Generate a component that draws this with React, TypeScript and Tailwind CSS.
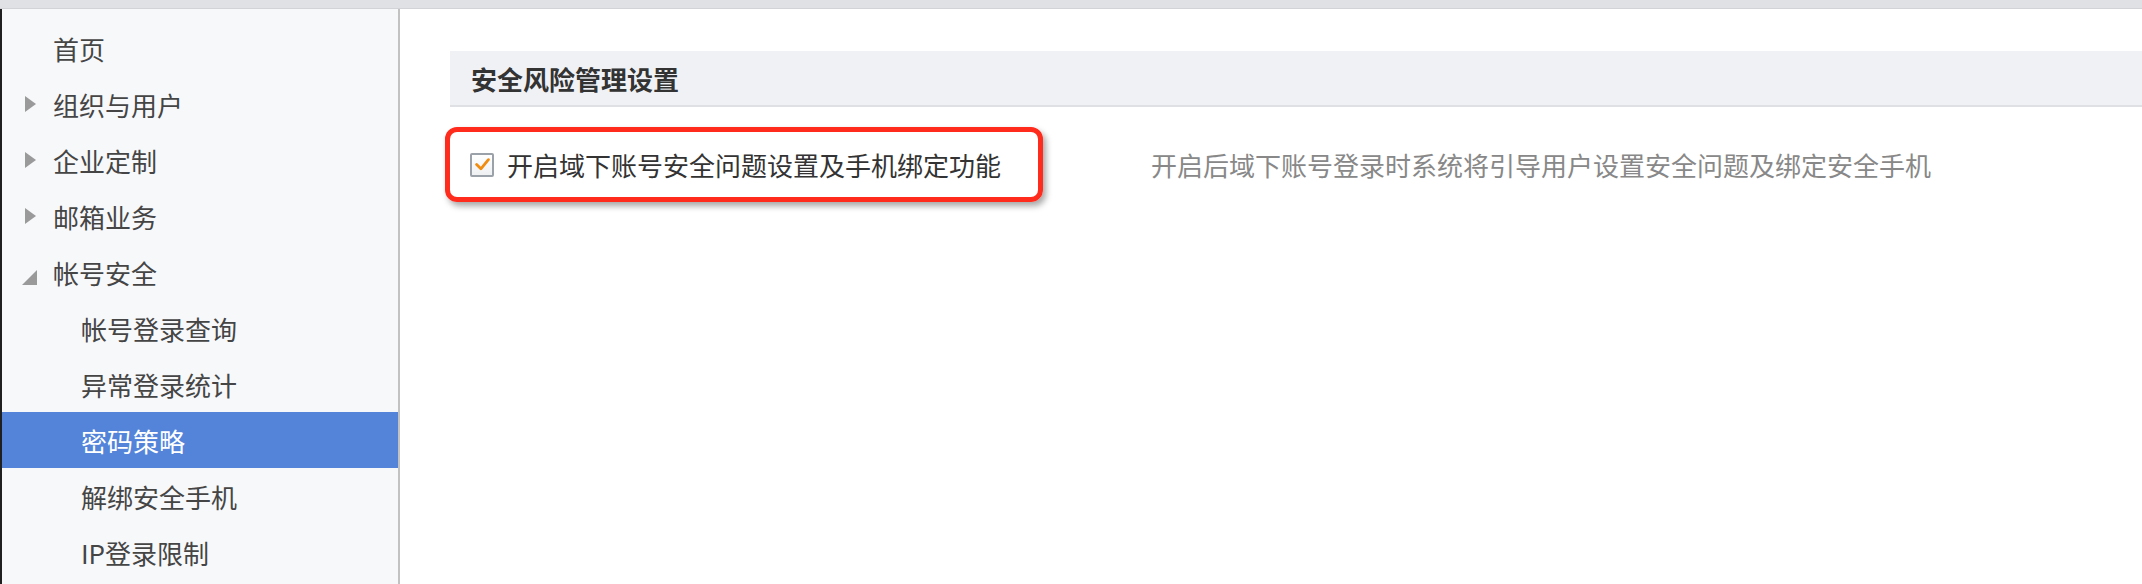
import React from 'react';

type NavItem = {
  label: string;
  level: 0 | 1;
  arrow?: 'right' | 'down';
  active?: boolean;
};

const navItems: NavItem[] = [
  { label: '首页', level: 0 },
  { label: '组织与用户', level: 0, arrow: 'right' },
  { label: '企业定制', level: 0, arrow: 'right' },
  { label: '邮箱业务', level: 0, arrow: 'right' },
  { label: '帐号安全', level: 0, arrow: 'down' },
  { label: '帐号登录查询', level: 1 },
  { label: '异常登录统计', level: 1 },
  { label: '密码策略', level: 1, active: true },
  { label: '解绑安全手机', level: 1 },
  { label: 'IP登录限制', level: 1 },
];

const font = { fontFamily: '"Noto Sans CJK SC", "Noto Sans", sans-serif' };

// 侧栏的小三角
const Arrow = ({ dir }: { dir: 'right' | 'down' }) =>
  dir === 'right' ? (
    <svg width="12" height="16" viewBox="0 0 12 16" className="absolute left-[23px]">
      <path d="M0 0 L11 8 L0 16 Z" fill="#9a9a9a" />
    </svg>
  ) : (
    <svg width="15" height="15" viewBox="0 0 15 15" className="absolute left-[20px] top-[26px]">
      <path d="M15 0 L15 15 L0 15 Z" fill="#9a9a9a" />
    </svg>
  );

const Sidebar = () => (
  <div className="w-[398px] shrink-0 bg-[#f7f8fa] border-r-2 border-[#c2c2c2] pt-[11px]">
    {navItems.map((item) => (
      <div
        key={item.label}
        className={`relative h-[56px] flex items-center text-[26px] ${
          item.level === 0 ? 'pl-[51px]' : 'pl-[79px]'
        } ${item.active ? 'bg-[#5384da] text-white' : 'text-[#454545]'}`}
      >
        {item.arrow && <Arrow dir={item.arrow} />}
        <span>{item.label}</span>
      </div>
    ))}
  </div>
);

const Checkbox = () => (
  <div className="w-[24px] h-[24px] border-2 border-[#9ba1a8] bg-gradient-to-b from-white to-[#eef0f2] rounded-[2px] flex items-center justify-center shrink-0">
    <svg width="15" height="13" viewBox="0 0 14 12">
      <path d="M1.5 6 L5.5 10 L12.5 1.5" fill="none" stroke="#f08c0f" strokeWidth="2.6" strokeLinecap="round" strokeLinejoin="round" />
    </svg>
  </div>
);

export default function App() {
  return (
    <div className="w-[2142px] h-[584px] overflow-hidden flex flex-col bg-white" style={font}>
      {/* 顶部灰条 */}
      <div className="h-[9px] shrink-0 bg-[#e0e1e5] border-b border-[#d2d3d7]" />

      <div className="flex flex-1 min-h-0">
        <div className="w-[2px] shrink-0 bg-[#202020]" />
        <Sidebar />

        {/* 主内容 */}
        <div className="flex-1 pt-[42px] pl-[50px]">
          <div className="h-[56px] bg-[#f0f1f5] border-b-2 border-[#dfe0e4] flex items-center pl-[21px]">
            <span className="text-[26px] font-bold text-[#333]">安全风险管理设置</span>
          </div>

          <div className="flex items-center mt-[20px]">
            <div className="-ml-[5px] h-[75px] border-[5px] border-[#ff2b1c] rounded-[12px] shadow-[3px_4px_6px_rgba(0,0,0,0.35)] flex items-center gap-[13px] pl-[20px] pr-[37px]">
              <Checkbox />
              <span className="text-[26px] text-[#333]">开启域下账号安全问题设置及手机绑定功能</span>
            </div>
            <span className="ml-[108px] text-[26px] text-[#888]">
              开启后域下账号登录时系统将引导用户设置安全问题及绑定安全手机
            </span>
          </div>
        </div>
      </div>
    </div>
  );
}
